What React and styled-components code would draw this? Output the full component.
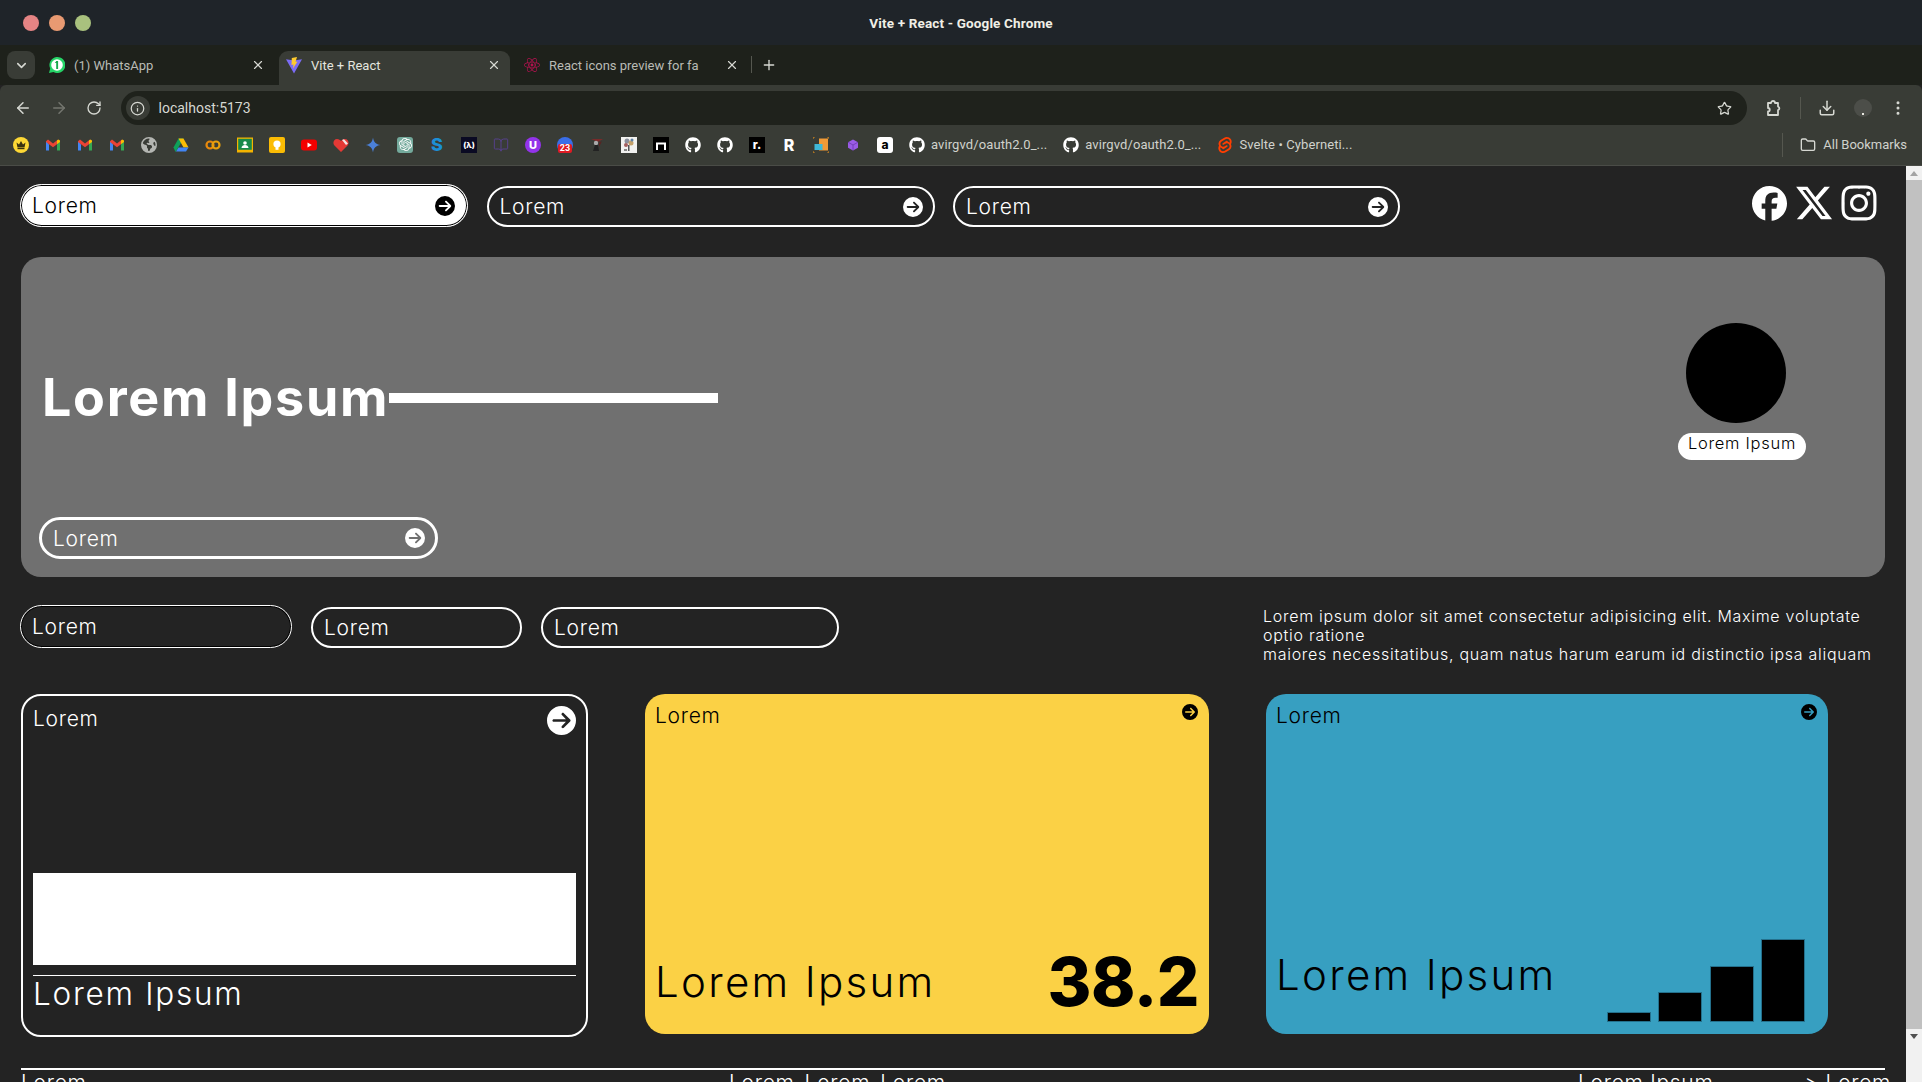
import styled, { createGlobalStyle } from 'styled-components';
import { FaCircleArrowRight, FaFacebook, FaGithub, FaInstagram, FaReact, FaXTwitter, FaEarthAmericas } from 'react-icons/fa6';
import { SiOpenai, SiSvelte } from 'react-icons/si';
import { ArrowLeft, ArrowRight, BookOpen, ChevronDown, Download, EllipsisVertical, Folder, Info, Plus, RotateCw, Star, X } from 'lucide-react';

const GlobalStyle = createGlobalStyle`
    html, body {
        margin: 0;
        padding: 0;
        height: 100%;
        overflow: hidden;
        background: #232323;
    }
    * {
        box-sizing: border-box;
    }
`;

const BODY_FONT = `"Inter", "Noto Sans", sans-serif`;
const CHROME_FONT = `"Roboto", "Noto Sans", sans-serif`;

const Gmail = () => (
    <svg width="16" height="16" viewBox="0 0 16 16">
        <path d="M1 4.2V13.5h3V7.2z" fill="#4285f4" />
        <path d="M12 7.2V13.5h3V4.2z" fill="#34a853" />
        <path d="M1 4.2 3 2.6 8 6.6 13 2.6 12 7.2 8 10.2 1 5z" fill="#ea4335" />
        <path d="M12 7.2V3.4L13.4 2.4 15 3.4V5z" fill="#fbbc04" />
    </svg>
);

const Crown = () => (
    <svg width="16" height="16" viewBox="0 0 16 16">
        <circle cx="8" cy="8" r="8" fill="#fdd835" />
        <path d="M3.5 5.5 6 7.5 8 4 10 7.5 12.5 5.5 11.5 10.5H4.5z" fill="#3a3210" />
        <rect x="4.5" y="11" width="7" height="1.2" fill="#3a3210" />
    </svg>
);

const Drive = () => (
    <svg width="16" height="16" viewBox="0 0 16 16">
        <path d="M5.5 1.5h5L5 11 2.5 15 0.5 10.5z" fill="#0ea05a" />
        <path d="M10.5 1.5 15.5 10.5H10.5L5.5 1.5z" fill="#fbbc04" />
        <path d="M3 14.5 5.5 10.5H15.5L13 14.5z" fill="#4285f4" />
    </svg>
);

const Colab = () => (
    <svg width="16" height="16" viewBox="0 0 16 16">
        <circle cx="5" cy="8" r="3.5" fill="none" stroke="#e8890c" strokeWidth="2.2" />
        <circle cx="11" cy="8" r="3.5" fill="none" stroke="#e8a00c" strokeWidth="2.2" />
    </svg>
);

const Classroom = () => (
    <svg width="16" height="16" viewBox="0 0 16 16">
        <rect width="16" height="15" y="0.5" fill="#f4b400" />
        <rect x="1.2" y="1.8" width="13.6" height="11" fill="#188a4a" />
        <circle cx="8" cy="6" r="1.8" fill="#fff" />
        <path d="M4.5 11c0-2 1.6-3 3.5-3s3.5 1 3.5 3z" fill="#fff" />
    </svg>
);

const Keep = () => (
    <svg width="16" height="16" viewBox="0 0 16 16">
        <rect width="16" height="16" rx="2" fill="#fbbc04" />
        <circle cx="8" cy="7" r="3.6" fill="#fff" />
        <rect x="6.5" y="10" width="3" height="2.8" fill="#fff" />
    </svg>
);

const Youtube = () => (
    <svg width="16" height="16" viewBox="0 0 16 16">
        <rect y="2.5" width="16" height="11" rx="3" fill="#f40000" />
        <path d="M6.5 5.6 10.8 8 6.5 10.4z" fill="#fff" />
    </svg>
);

const Heart = () => (
    <svg width="16" height="16" viewBox="0 0 16 16">
        <path d="M8 15 1 8C-0.5 5.5 1 2 4 2c2 0 3 1 4 2 1-1 2-2 4-2 3 0 4.5 3.5 3 6z" fill="#e53935" />
        <path d="M9 3 11 2.2 15 6.5 13 8z" fill="#f3e6e6" />
    </svg>
);

const Gemini = () => (
    <svg width="16" height="16" viewBox="0 0 16 16">
        <path d="M8 0.5C8.6 5 11 7.4 15.5 8 11 8.6 8.6 11 8 15.5 7.4 11 5 8.6 0.5 8 5 7.4 7.4 5 8 0.5z" fill="#4b80d8" />
    </svg>
);

const Calendar = () => (
    <svg width="16" height="16" viewBox="0 0 16 16">
        <circle cx="8" cy="8" r="8" fill="#3a6ee8" />
        <rect x="1" y="7" width="14" height="9" rx="2" fill="#e01b24" />
    </svg>
);

const DarkFigure = () => (
    <svg width="16" height="16" viewBox="0 0 16 16">
        <path d="M2 2h12L9 5z" fill="#7a2a2a" />
        <circle cx="7" cy="6" r="2.2" fill="#aaa" />
        <path d="M4 14 6 8h3l1 6z" fill="#222" />
        <path d="M10 6 13 4 10 10z" fill="#5d2020" />
    </svg>
);

const ArtBook = () => (
    <svg width="16" height="16" viewBox="0 0 16 16">
        <rect width="16" height="16" fill="#f2f2f0" />
        <circle cx="6" cy="4" r="2.5" fill="#8a8f9c" />
        <circle cx="10" cy="6" r="2.5" fill="#c4a16a" />
        <circle cx="5" cy="8" r="2" fill="#a35e5e" />
        <circle cx="11" cy="3" r="1.5" fill="#5c7fa3" />
        <rect x="7" y="8" width="1.5" height="6" fill="#555" />
        <rect x="3" y="12" width="3" height="2" fill="#888" />
    </svg>
);

const ArchSquare = () => (
    <svg width="16" height="16" viewBox="0 0 16 16">
        <rect width="16" height="16" fill="#000" />
        <path d="M3 5.5h10V13h-2V7.5H5V13H3z" fill="#fff" />
    </svg>
);

const TagChat = () => (
    <svg width="16" height="16" viewBox="0 0 16 16">
        <rect x="6" y="1.5" width="9" height="12" fill="#f09a37" />
        <rect x="1.5" y="7" width="8" height="6" fill="#3fb8d8" />
        <path d="M0 0h2v.6H.6V2H0zM0 16v-2h.6v1.4H2v.6zM16 16h-2v-.6h1.4V14h.6zM16 0v2h-.6V.6H14V0z" fill="#c8801e" />
    </svg>
);

const Hexagon = () => (
    <svg width="16" height="16" viewBox="0 0 16 16">
        <path d="M8 2.5 13 5.2V10.8L8 13.5 3 10.8V5.2z" fill="#9a5ce6" />
        <path d="M3 5.2 8 8 13 5.2M8 8V13.5" stroke="#6b38b0" strokeWidth=".8" fill="none" />
    </svg>
);

const WhatsappBadge = () => (
    <svg width="16" height="16" viewBox="0 0 16 16">
        <path d="M0 16 1.2 11.5A8 8 0 1 1 4.5 15z" fill="#25d366" />
        <circle cx="8" cy="8" r="5.8" fill="#fff" />
        <rect x="7.2" y="4" width="1.9" height="8" fill="#18a84c" />
        <path d="M5.8 6 7.4 4h.8v2z" fill="#18a84c" />
    </svg>
);

const ViteLogo = () => (
    <svg width="16" height="17" viewBox="0 0 16 17">
        <path d="M0 2.2 8 16.5 16 2.2 8 3.6z" fill="#7b6cf6" />
        <path d="M11 0 5.8 1 5.5 8 7.5 7.4 7 11.5 11.5 4.5 9.5 5z" fill="#ffcb2e" />
    </svg>
);

const ExtensionPiece = () => (
    <svg width="18" height="18" viewBox="0 0 18 18" fill="none" stroke="currentColor" strokeWidth="1.8" strokeLinejoin="round">
        <path d="M4 4h3a2 2 0 0 1 4 0h3v3.5a1.8 1.8 0 0 1 0 3.5V16H4v-3.5a1.7 1.7 0 0 0 0-3.5z" />
    </svg>
);

const FOOTER_LINKS = ["Lorem", "Lorem", "Lorem"];
const BARS = [10, 30, 56, 83];

const BookmarkIcons = () => (
    <>
        <BookmarkIcon><Crown /></BookmarkIcon>
        <BookmarkIcon><Gmail /></BookmarkIcon>
        <BookmarkIcon><Gmail /></BookmarkIcon>
        <BookmarkIcon><Gmail /></BookmarkIcon>
        <BookmarkIcon><FaEarthAmericas size={16} color="#b4b6b2" /></BookmarkIcon>
        <BookmarkIcon><Drive /></BookmarkIcon>
        <BookmarkIcon><Colab /></BookmarkIcon>
        <BookmarkIcon><Classroom /></BookmarkIcon>
        <BookmarkIcon><Keep /></BookmarkIcon>
        <BookmarkIcon><Youtube /></BookmarkIcon>
        <BookmarkIcon><Heart /></BookmarkIcon>
        <BookmarkIcon><Gemini /></BookmarkIcon>
        <BookmarkIcon $bg="#74aa9c" $radius="3px"><SiOpenai size={13} color="#fff" /></BookmarkIcon>
        <BookmarkIcon $color="#1c8fd6" $size={18}>S</BookmarkIcon>
        <BookmarkIcon $color="#fff" $bg="#0a0a23" $size={8}>(λ)</BookmarkIcon>
        <BookmarkIcon><BookOpen size={16} color="#56408a" strokeWidth={1.5} /></BookmarkIcon>
        <BookmarkIcon $color="#fff" $bg="#9333ea" $size={11} $radius="50%">U</BookmarkIcon>
        <BookmarkIcon><CalendarTile><Calendar /><CalendarDay>23</CalendarDay></CalendarTile></BookmarkIcon>
        <BookmarkIcon><DarkFigure /></BookmarkIcon>
        <BookmarkIcon><ArtBook /></BookmarkIcon>
        <BookmarkIcon><ArchSquare /></BookmarkIcon>
        <BookmarkIcon><FaGithub size={16} color="#fff" /></BookmarkIcon>
        <BookmarkIcon><FaGithub size={16} color="#fff" /></BookmarkIcon>
        <BookmarkIcon $color="#fff" $bg="#000" $size={12}>r.</BookmarkIcon>
        <BookmarkIcon $color="#fff" $size={16}>R</BookmarkIcon>
        <BookmarkIcon><TagChat /></BookmarkIcon>
        <BookmarkIcon><Hexagon /></BookmarkIcon>
        <BookmarkIcon $color="#000" $bg="#fff" $size={12} $radius="3px">a</BookmarkIcon>
    </>
);

const App = () => {
    return (
        <Window>
            <GlobalStyle />

            <TitleBar>
                <Lights>
                    <Light $color="#e58484" />
                    <Light $color="#e89a72" />
                    <Light $color="#a9c17e" />
                </Lights>
                <WindowTitle>Vite + React - Google Chrome</WindowTitle>
            </TitleBar>

            <TabStrip>
                <TabSearch><ChevronDown size={15} strokeWidth={2.5} /></TabSearch>
                <Tab $width={238} $left={8} $right={14} $marginLeft={6}>
                    <WhatsappBadge />
                    <TabTitle>(1) WhatsApp</TabTitle>
                    <TabClose><X size={14} strokeWidth={2} /></TabClose>
                </Tab>
                <Tab $width={231} $left={7} $right={9} $active>
                    <ViteLogo />
                    <TabTitle>Vite + React</TabTitle>
                    <TabClose><X size={14} strokeWidth={2} /></TabClose>
                </Tab>
                <Tab $width={241} $left={14} $right={12}>
                    <FaReact size={16} color="#b3124f" />
                    <TabTitle>React icons preview for fa</TabTitle>
                    <TabClose><X size={14} strokeWidth={2} /></TabClose>
                </Tab>
                <TabDivider />
                <NewTab><Plus size={16} strokeWidth={2} /></NewTab>
            </TabStrip>

            <Toolbar>
                <NavIcon><ArrowLeft size={18} /></NavIcon>
                <NavIcon $disabled><ArrowRight size={18} /></NavIcon>
                <NavIcon><RotateCw size={16} /></NavIcon>
                <UrlBar>
                    <SiteInfo><Info size={15} /></SiteInfo>
                    <UrlText>localhost:5173</UrlText>
                    <Star size={15} color="#d6d8d2" strokeWidth={2} />
                </UrlBar>
                <NavIcon><ExtensionPiece /></NavIcon>
                <ToolbarDivider />
                <NavIcon><Download size={18} /></NavIcon>
                <Profile />
                <NavIcon><EllipsisVertical size={18} /></NavIcon>
            </Toolbar>

            <BookmarksBar>
                <BookmarkIcons />
                <Bookmark>
                    <FaGithub size={16} color="#fff" />
                    <BookmarkLabel $spaced>avirgvd/oauth2.0_...</BookmarkLabel>
                </Bookmark>
                <Bookmark>
                    <FaGithub size={16} color="#fff" />
                    <BookmarkLabel $spaced>avirgvd/oauth2.0_...</BookmarkLabel>
                </Bookmark>
                <Bookmark>
                    <SiSvelte size={16} color="#ff3e00" />
                    <BookmarkLabel $spaced>Svelte • Cyberneti...</BookmarkLabel>
                </Bookmark>
                <AllBookmarks>
                    <Folder size={16} color="#d6d8d2" />
                    <BookmarkLabel>All Bookmarks</BookmarkLabel>
                </AllBookmarks>
            </BookmarksBar>

            <Viewport>
                <Page>
                    <TopNav>
                        <Pill $width={448} $active>
                            <PillLabel>Lorem</PillLabel>
                            <FaCircleArrowRight size={20} color="#000" />
                        </Pill>
                        <Pill $width={448}>
                            <PillLabel>Lorem</PillLabel>
                            <FaCircleArrowRight size={20} color="#fff" />
                        </Pill>
                        <Pill $width={447}>
                            <PillLabel>Lorem</PillLabel>
                            <FaCircleArrowRight size={20} color="#fff" />
                        </Pill>
                        <Socials>
                            <FacebookIcon size={35} />
                            <FaXTwitter size={40} />
                            <FaInstagram size={40} />
                        </Socials>
                    </TopNav>

                    <Hero>
                        <HeroMain>
                            <HeroHeading>
                                <HeroTitle>Lorem Ipsum</HeroTitle>
                                <HeroRule />
                            </HeroHeading>
                            <HeroPill $width={399}>
                                <PillLabel>Lorem</PillLabel>
                                <FaCircleArrowRight size={20} color="#fff" />
                            </HeroPill>
                        </HeroMain>
                        <HeroProfile>
                            <Avatar />
                            <AvatarLabel>Lorem Ipsum</AvatarLabel>
                        </HeroProfile>
                    </Hero>

                    <FilterRow>
                        <Pill $width={272} $outlined>
                            <PillLabel>Lorem</PillLabel>
                        </Pill>
                        <Pill $width={211}>
                            <PillLabel>Lorem</PillLabel>
                        </Pill>
                        <Pill $width={298}>
                            <PillLabel>Lorem</PillLabel>
                        </Pill>
                        <Intro>
                            Lorem ipsum dolor sit amet consectetur adipisicing elit. Maxime voluptate<br />
                            optio ratione<br />
                            maiores necessitatibus, quam natus harum earum id distinctio ipsa aliquam
                        </Intro>
                    </FilterRow>

                    <CardRow>
                        <OutlineCard>
                            <CardHeader>
                                <CardLabel>Lorem</CardLabel>
                                <FaCircleArrowRight size={29} color="#fff" />
                            </CardHeader>
                            <CardImage />
                            <CardRule />
                            <OutlineTitle>Lorem Ipsum</OutlineTitle>
                        </OutlineCard>

                        <ColorCard $bg="#fbd145" $width={564}>
                            <CardHeader>
                                <CardLabel $dark>Lorem</CardLabel>
                                <FaCircleArrowRight size={16} color="#000" />
                            </CardHeader>
                            <CardBottom>
                                <ColorTitle>Lorem Ipsum</ColorTitle>
                                <Figure>38.2</Figure>
                            </CardBottom>
                        </ColorCard>

                        <ColorCard $bg="#379fc1" $width={562}>
                            <CardHeader>
                                <CardLabel $dark>Lorem</CardLabel>
                                <FaCircleArrowRight size={16} color="#000" />
                            </CardHeader>
                            <CardBottom $chart>
                                <ColorTitle $raised>Lorem Ipsum</ColorTitle>
                                <Bars>
                                    {BARS.map((h) => <Bar key={h} $height={h} />)}
                                </Bars>
                            </CardBottom>
                        </ColorCard>
                    </CardRow>

                    <Footer>
                        <FooterText>Lorem</FooterText>
                        <FooterLinks>
                            {FOOTER_LINKS.map((link, i) => <FooterText key={i}>{link}</FooterText>)}
                        </FooterLinks>
                        <FooterText>Lorem Ipsum</FooterText>
                        <FooterText>&gt; Lorem</FooterText>
                    </Footer>
                </Page>

                <Scrollbar>
                    <ScrollArrow $up />
                    <ScrollThumb />
                    <ScrollArrow />
                </Scrollbar>
            </Viewport>
        </Window>
    );
};

const Window = styled.div`
    width: 1922px;
    height: 1082px;
    display: flex;
    flex-direction: column;
    overflow: hidden;
    background: #232323;
    font-family: ${BODY_FONT};
`;

const TitleBar = styled.div`
    height: 45px;
    flex-shrink: 0;
    display: flex;
    align-items: center;
    padding-left: 23px;
    background: #1f2429;
`;

const Lights = styled.div`
    display: flex;
    gap: 10px;
`;

const Light = styled.span`
    width: 16px;
    height: 16px;
    border-radius: 50%;
    background: ${props => props.$color};
`;

const WindowTitle = styled.div`
    flex: 1;
    padding-right: 91px;
    text-align: center;
    color: #f0efe6;
    font: 700 13.5px ${CHROME_FONT};
    letter-spacing: 0.15px;
`;

const TabStrip = styled.div`
    height: 40px;
    flex-shrink: 0;
    display: flex;
    align-items: flex-end;
    background: #1e211b;
`;

const TabSearch = styled.div`
    width: 28px;
    height: 28px;
    margin: 0 0 6px 7px;
    border-radius: 8px;
    display: flex;
    align-items: center;
    justify-content: center;
    background: #393c36;
    color: #d6d8d2;
`;

const Tab = styled.div`
    width: ${props => props.$width}px;
    height: 34px;
    margin-left: ${props => props.$marginLeft || 0}px;
    padding: 0 ${props => props.$right}px 6px ${props => props.$left}px;
    display: flex;
    align-items: center;
    border-radius: 9px 9px 0 0;
    background: ${props => props.$active ? "#393c36" : "transparent"};
    color: ${props => props.$active ? "#e4e5df" : "#b9bbb5"};
`;

const TabTitle = styled.span`
    flex: 1;
    margin-left: 9px;
    font: 400 13px ${CHROME_FONT};
`;

const TabClose = styled.span`
    display: flex;
    color: #d6d8d2;
`;

const TabDivider = styled.span`
    width: 1px;
    height: 17px;
    margin-bottom: 12px;
    background: #55574f;
`;

const NewTab = styled.span`
    display: flex;
    margin: 0 0 12px 9px;
    color: #d6d8d2;
`;

const Toolbar = styled.div`
    height: 40px;
    flex-shrink: 0;
    padding: 6px 15px 0 14px;
    display: flex;
    align-items: center;
    gap: 17.5px;
    border-radius: 6px 6px 0 0;
    background: #393c36;
`;

const NavIcon = styled.span`
    width: 18px;
    display: flex;
    justify-content: center;
    color: ${props => props.$disabled ? "#74766f" : "#d6d8d2"};
`;

const UrlBar = styled.div`
    flex: 1;
    height: 34px;
    padding: 0 15px 0 5px;
    display: flex;
    align-items: center;
    border-radius: 17px;
    background: #1f221c;
`;

const SiteInfo = styled.span`
    width: 24px;
    height: 24px;
    border-radius: 50%;
    display: flex;
    align-items: center;
    justify-content: center;
    background: #393c36;
    color: #d6d8d2;
`;

const UrlText = styled.span`
    flex: 1;
    margin-left: 9px;
    color: #d6d8d2;
    font: 400 14px ${CHROME_FONT};
`;

const ToolbarDivider = styled.span`
    width: 1px;
    height: 22px;
    background: #55574f;
`;

const Profile = styled.span`
    position: relative;
    width: 18px;
    height: 18px;
    border-radius: 50%;
    background: #4c4e49;

    &::after {
        content: "";
        position: absolute;
        left: 8px;
        bottom: 2px;
        width: 2px;
        height: 2px;
        background: #e8e8e0;
    }
`;

const BookmarksBar = styled.div`
    height: 41px;
    flex-shrink: 0;
    padding: 0 15px 1px 13px;
    display: flex;
    align-items: center;
    gap: 16px;
    background: #393c36;
    border-bottom: 1px solid #4a4c47;
`;

const BookmarkIcon = styled.span`
    width: 16px;
    height: 16px;
    flex-shrink: 0;
    display: flex;
    align-items: center;
    justify-content: center;
    border-radius: ${props => props.$radius || "0"};
    background: ${props => props.$bg || "transparent"};
    color: ${props => props.$color || "#fff"};
    font: 800 ${props => props.$size || 12}px ${BODY_FONT};
`;

const CalendarTile = styled.span`
    position: relative;
    width: 16px;
    height: 16px;
    display: flex;
`;

const CalendarDay = styled.span`
    position: absolute;
    left: 0;
    right: 0;
    bottom: 0;
    text-align: center;
    color: #fff;
    font: 700 9px/10px ${CHROME_FONT};
`;

const Bookmark = styled.span`
    display: flex;
    align-items: center;
    gap: 6px;
    flex-shrink: 0;
`;

const BookmarkLabel = styled.span`
    color: #d0d2cc;
    font: 400 13px ${CHROME_FONT};
    letter-spacing: ${props => props.$spaced ? 0.1 : 0}px;
    white-space: nowrap;
`;

const AllBookmarks = styled.span`
    margin-left: auto;
    height: 24px;
    padding-left: 17px;
    display: flex;
    align-items: center;
    gap: 7px;
    border-left: 1px solid #55574f;
`;

const Viewport = styled.div`
    flex: 1;
    min-height: 0;
    display: flex;
`;

const Page = styled.div`
    flex: 1;
    min-width: 0;
    padding: 17px 21px 0;
    overflow: hidden;
    letter-spacing: 0.045em;
`;

const TopNav = styled.div`
    display: flex;
    align-items: flex-end;
    gap: 18.5px;
    margin-left: -1px;
`;

const Pill = styled.div`
    width: ${props => props.$width}px;
    height: ${props => props.$active || props.$outlined ? 43 : 41}px;
    padding: 0 ${props => props.$active ? 12 : 10}px 0 11px;
    flex-shrink: 0;
    display: flex;
    align-items: center;
    justify-content: space-between;
    border-radius: 22px;
    border: ${props => props.$active || props.$outlined ? "1.5px solid #fff" : "2px solid #fff"};
    background: ${props => props.$active ? "#fff" : "transparent"};
    box-shadow: ${props => props.$active || props.$outlined ? "inset 0 0 0 1px #000" : "none"};
    color: ${props => props.$active ? "#000" : "#fff"};
`;

const PillLabel = styled.span`
    font-size: 21px;
    font-weight: 300;
`;

const Socials = styled.div`
    margin: 0 6px 4px auto;
    display: flex;
    align-items: center;
    gap: 5px;
    color: #fff;
`;

const FacebookIcon = styled(FaFacebook)`
    margin: 0 2.5px;
`;

const Hero = styled.section`
    height: 320px;
    margin-top: 30px;
    display: flex;
    justify-content: space-between;
    border-radius: 20px;
    background: #707070;
`;

const HeroMain = styled.div`
    padding: 111px 0 18px 18px;
    display: flex;
    flex-direction: column;
    justify-content: space-between;
`;

const HeroHeading = styled.div`
    display: flex;
    align-items: center;
    padding-left: 3px;
`;

const HeroTitle = styled.h1`
    margin: 0;
    color: #fff;
    font-size: 52px;
    font-weight: 700;
    line-height: 60px;
    letter-spacing: 0.033em;
`;

const HeroRule = styled.span`
    width: 329px;
    height: 10px;
    background: #fff;
`;

const HeroPill = styled(Pill)`
    height: 42px;
    border-width: 3px;
`;

const HeroProfile = styled.div`
    margin: 66px 79px 0 0;
    display: flex;
    flex-direction: column;
    align-items: flex-start;
    gap: 10px;
`;

const Avatar = styled.div`
    width: 100px;
    height: 100px;
    margin-left: 8px;
    border-radius: 50%;
    background: #000;
`;

const AvatarLabel = styled.div`
    width: 128px;
    height: 27px;
    border-radius: 14px;
    text-align: center;
    background: #fff;
    color: #000;
    font-size: 16.5px;
    font-weight: 300;
    line-height: 20px;
`;

const FilterRow = styled.div`
    margin: 28px 0 0 -1px;
    display: flex;
    align-items: flex-start;
    gap: 19px;

    & > * + * {
        margin-top: 2px;
    }
`;

const Intro = styled.p`
    && {
        margin: 2px 0 0 auto;
    }
    width: 622px;
    color: #fff;
    font-size: 16px;
    font-weight: 300;
    line-height: 19.2px;
    white-space: nowrap;
`;

const CardRow = styled.div`
    margin-top: 29px;
    display: flex;
    align-items: flex-start;
    gap: 57px;
`;

const CardHeader = styled.div`
    display: flex;
    align-items: flex-start;
    justify-content: space-between;
`;

const CardLabel = styled.span`
    color: ${props => props.$dark ? "#000" : "#fff"};
    font-size: 21px;
    font-weight: 300;
    line-height: 26px;
`;

const OutlineCard = styled.article`
    width: 567px;
    height: 343px;
    padding: 10px 10px 0;
    border: 2px solid #fff;
    border-radius: 20px;
`;

const CardImage = styled.div`
    height: 92px;
    margin-top: 138px;
    background: #fff;
`;

const CardRule = styled.div`
    height: 1.5px;
    margin-top: 10px;
    background: #fff;
`;

const OutlineTitle = styled.h2`
    margin: 0;
    color: #fff;
    font-size: 31.5px;
    font-weight: 300;
    line-height: 36px;
    letter-spacing: 0.055em;
`;

const ColorCard = styled.article`
    width: ${props => props.$width}px;
    height: 340px;
    padding: 9px 10px 0 10px;
    display: flex;
    flex-direction: column;
    border-radius: 20px;
    background: ${props => props.$bg};

    ${CardHeader} svg {
        margin: 1px 1px 0 0;
    }
`;

const CardBottom = styled.div`
    margin-top: auto;
    padding-bottom: ${props => props.$chart ? 12 : 17}px;
    padding-right: ${props => props.$chart ? 13 : 0}px;
    display: flex;
    align-items: ${props => props.$chart ? "flex-end" : "center"};
    justify-content: space-between;
`;

const ColorTitle = styled.h2`
    margin: 0 0 ${props => props.$raised ? 22 : 0}px;
    color: #000;
    font-size: 42px;
    font-weight: 300;
    line-height: 50px;
    letter-spacing: 0.055em;
`;

const Figure = styled.div`
    color: #000;
    font-size: 67px;
    font-weight: 800;
    line-height: 70px;
    letter-spacing: -0.5px;
`;

const Bars = styled.div`
    display: flex;
    align-items: flex-end;
    gap: 7.5px;
`;

const Bar = styled.span`
    width: 44px;
    height: ${props => props.$height}px;
    border: 1px solid #24708c;
    background: #000;
`;

const Footer = styled.footer`
    margin-top: 31px;
    display: grid;
    grid-template-columns: 708px 849px 226.5px auto;
    border-top: 2px solid #fff;
`;

const FooterText = styled.span`
    color: #fff;
    font-size: 21px;
    font-weight: 300;
    line-height: 26px;
    white-space: nowrap;
`;

const FooterLinks = styled.div`
    display: flex;
    gap: 10px;
`;

const Scrollbar = styled.div`
    width: 16px;
    flex-shrink: 0;
    display: flex;
    flex-direction: column;
    background: #f1f1f1;
`;

const ScrollArrow = styled.span`
    height: 14px;
    flex-shrink: 0;
    display: flex;
    align-items: center;
    justify-content: center;

    &::before {
        content: "";
        border-left: 4px solid transparent;
        border-right: 4px solid transparent;
        ${props => props.$up ? "border-bottom: 5px solid #a3a3a3;" : "border-top: 5px solid #505050;"}
    }
`;

const ScrollThumb = styled.span`
    height: 849px;
    background: #c1c1c1;
`;

export default App;
